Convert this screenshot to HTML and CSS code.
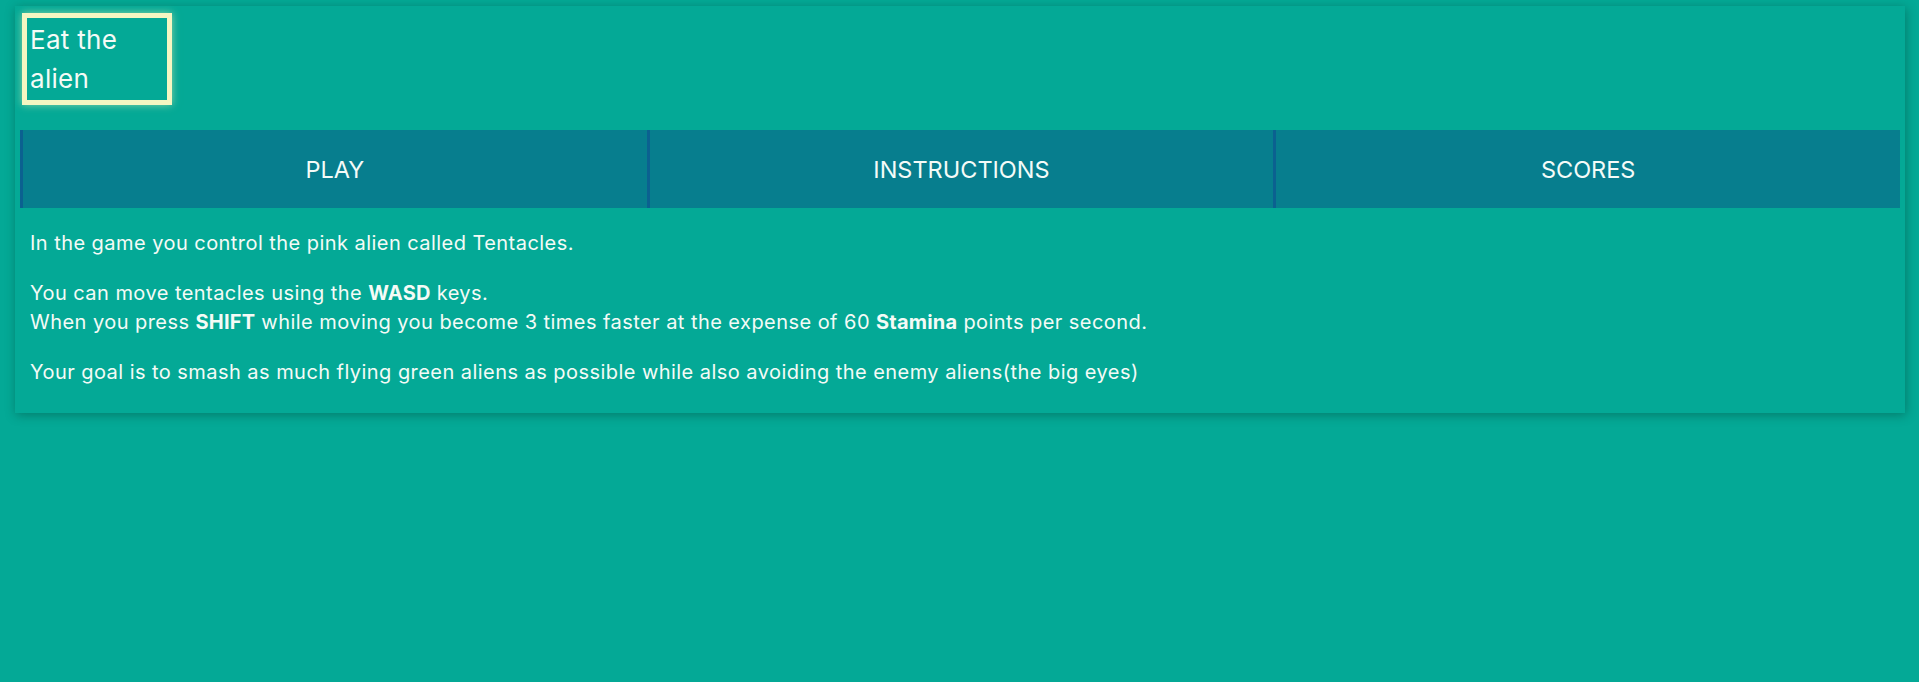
FILE: index.html
```html
<!DOCTYPE html>
<html lang="en">
<head>
<meta charset="utf-8">
<title>Eat the alien</title>
<link rel="stylesheet" href="styles.css">
</head>
<body>
<div class="card">
  <header class="header">
    <div class="logo">Eat the alien</div>
  </header>
  <nav class="tabs">
    <div class="tab">PLAY</div>
    <div class="tab">INSTRUCTIONS</div>
    <div class="tab">SCORES</div>
  </nav>
  <section class="content">
    <p>In the game you control the pink alien called Tentacles.</p>
    <p>You can move tentacles using the <b>WASD</b> keys.<br>When you press <b>SHIFT</b> while moving you become 3 times faster at the expense of 60 <b>Stamina</b> points per second.</p>
    <p>Your goal is to smash as much flying green aliens as possible while also avoiding the enemy aliens(the big eyes)</p>
  </section>
</div>
</body>
</html>
```

FILE: styles.css
```css
html, body {
  margin: 0;
  padding: 0;
  background: #04a996;
  height: 100%;
}
body {
  padding: 6px 14px 0 15px;
  box-sizing: border-box;
  font-family: Inter, "DejaVu Sans", sans-serif;
  color: #f4fbf6;
}
.card {
  background: #04a996;
  padding: 5px;
  box-shadow: 1px 2px 10px rgba(0, 40, 30, 0.35);
}
.header {
  display: flex;
  padding: 2px;
}
.logo {
  width: 135px;
  height: 78px;
  padding: 2px 2px 2px 3px;
  border: 5px solid #f5f6c2;
  box-shadow: 0 0 8px rgba(245, 246, 180, 0.55);
  font-size: 26px;
  letter-spacing: 0.3px;
  line-height: 39px;
  overflow: hidden;
}
.tabs {
  display: grid;
  grid-template-columns: repeat(3, 1fr);
  margin-top: 23px;
  height: 78px;
  background: #077e8e;
}
.tab {
  display: flex;
  align-items: center;
  justify-content: center;
  border-left: 3px solid #0b6190;
  font-size: 23.5px;
  color: #f4fbf8;
}
.content {
  padding: 0 10px;
  font-size: 20px;
  letter-spacing: 0.45px;
  line-height: 29px;
}
.content p {
  margin: 21px 0;
}
.content b {
  font-weight: 700;
  letter-spacing: 0.2px;
}
```
